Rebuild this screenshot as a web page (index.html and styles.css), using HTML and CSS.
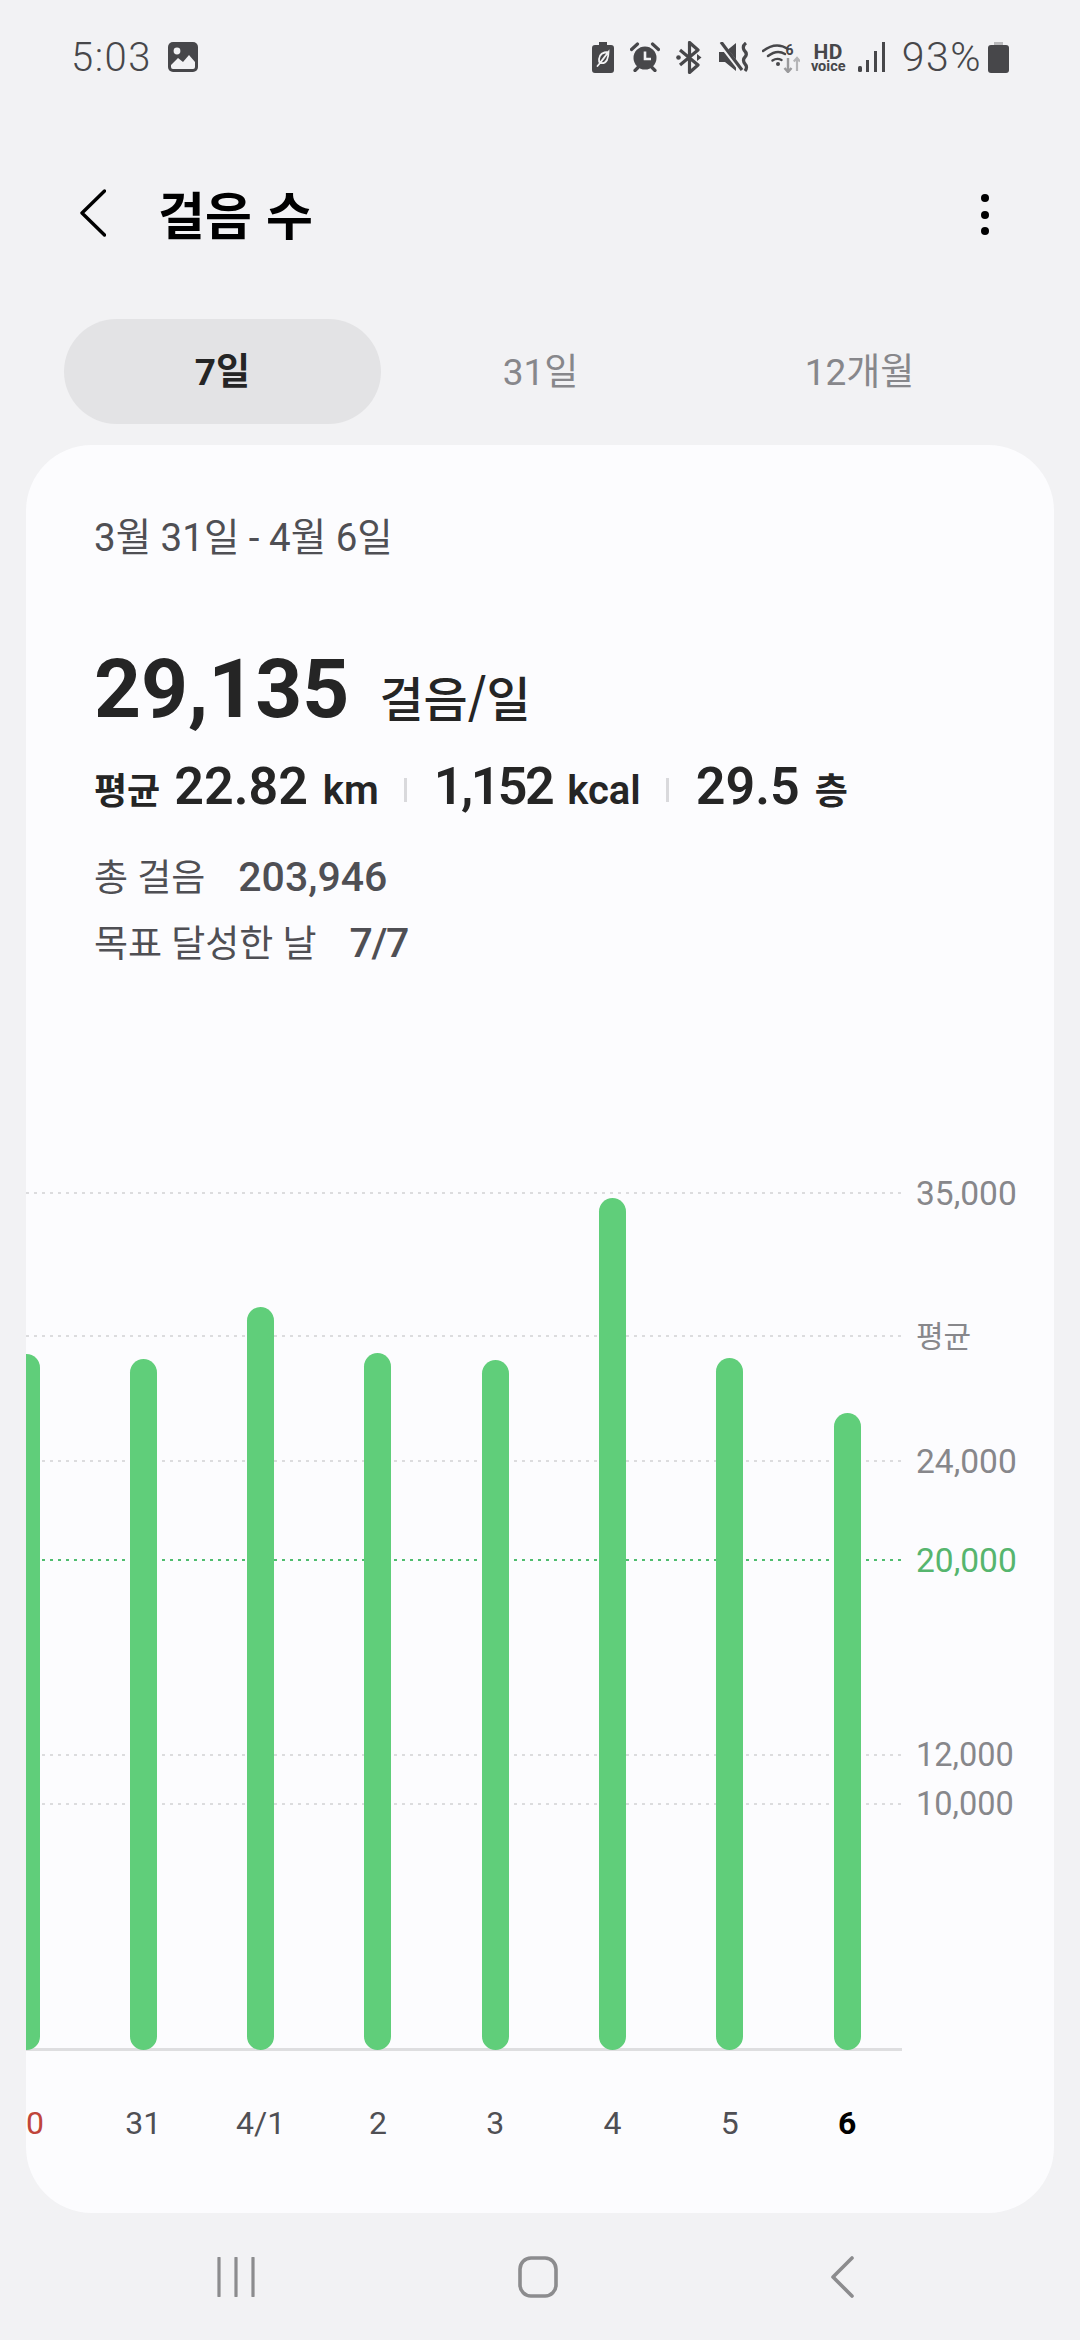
FILE: index.html
```html
<!DOCTYPE html>
<html lang="ko">
<head>
<meta charset="utf-8">
<title>걸음 수</title>
<link rel="stylesheet" href="styles.css">
</head>
<body>
<div class="screen">
  <header class="status">
    <div class="status-left">
      <span class="time">5:03</span>
      <svg class="ic-photo" viewBox="0 0 32 32"><rect x="1" y="1" width="30" height="30" rx="5" fill="#47474a"/><path d="M4 24L11 17L16 21L22 14L28 21V26Q28 28 26 28H6Q4 28 4 26Z" fill="#f2f2f4"/><circle cx="10" cy="10" r="3.400" fill="#f2f2f4"/></svg>
    </div>
    <div class="status-right">
      <svg class="ic-batleaf" viewBox="0 0 22 31"><path d="M7 0H15V3H19Q22 3 22 6V28Q22 31 19 31H3Q0 31 0 28V6Q0 3 3 3H7Z" fill="#47474a"/><path d="M16.500 10C11 10 7.500 12.500 7 17Q6.800 19.500 8 21L5.500 24M8 21Q13 22 15 18Q16.500 14.500 16.500 10ZM8 21L12 16" fill="none" stroke="#f2f2f4" stroke-width="1.800" stroke-linecap="round"/></svg>
      <svg class="ic-alarm" viewBox="0 0 30 30"><circle cx="15" cy="16" r="11.500" fill="#47474a"/><path d="M15 9.500V17H21" fill="none" stroke="#f2f2f4" stroke-width="2.600"/><path d="M1.500 7.500L7.500 2M28.500 7.500L22.500 2M5 28.500L8 25.500M25 28.500L22 25.500" stroke="#47474a" stroke-width="3.200" stroke-linecap="round" fill="none"/></svg>
      <svg class="ic-bt" viewBox="0 0 28 33"><path d="M4 9L22 24L13.500 31.500V1.500L22 9L4 24" fill="none" stroke="#47474a" stroke-width="3.200" stroke-linejoin="round"/><circle cx="2.500" cy="16.500" r="2.300" fill="#47474a"/><path d="M21 13L25.500 16.500L21 20Z" fill="#47474a"/></svg>
      <svg class="ic-mute" viewBox="0 0 31 30"><path d="M0 10H6L17 1V29L6 20H0Z" fill="#47474a"/><path d="M1 1L22 28" stroke="#f2f2f4" stroke-width="5"/><path d="M2 0L23 28" stroke="#47474a" stroke-width="3.200"/><path d="M27 1Q23 4 25 8Q29 12 26 15Q23 18 26 22Q29 25 26 29" fill="none" stroke="#47474a" stroke-width="3.200"/></svg>
      <svg class="ic-wifi" viewBox="0 0 38 31"><path d="M1 9Q14 -1 26 7M6 14Q15 7 23 12M10.500 18.500Q15 15.500 19.500 18" fill="none" stroke="#47474a" stroke-width="2.400" stroke-linecap="round"/><circle cx="16" cy="22" r="2" fill="#47474a"/><text x="23.500" y="13" class="wifi-six">6</text><path d="M26 16V30M22.500 26L26 30L29.500 26" fill="none" stroke="#9a9a9c" stroke-width="2.400"/><path d="M35 29V16M31.800 19.500L35 16L38 19.500" fill="none" stroke="#b5b5b7" stroke-width="2.200"/></svg>
      <div class="hd"><span class="hd-top">HD</span><span class="hd-low">voice</span></div>
      <svg class="ic-signal" viewBox="0 0 28 30"><rect x="0" y="24" width="4" height="6" rx="1.500" fill="#47474a"/><rect x="8" y="18" width="3" height="12" fill="#47474a"/><rect x="16" y="9" width="3" height="21" fill="#47474a"/><rect x="24" y="0" width="3" height="30" fill="#47474a"/></svg>
      <span class="pct">93%</span>
      <svg class="ic-bat" viewBox="0 0 21 31"><path d="M6 0H15V3H6Z" fill="#b9b9bb"/><path d="M3 3H18Q21 3 21 6V28Q21 31 18 31H3Q0 31 0 28V6Q0 3 3 3Z" fill="#47474a"/></svg>
    </div>
  </header>

  <div class="appbar">
    <svg class="ic-back" viewBox="0 0 26 48"><path d="M24.500 2L2 24L24.500 46" fill="none" stroke="#000" stroke-width="3.400" stroke-linecap="round" stroke-linejoin="round"/></svg>
    <h1 class="title">걸음 수</h1>
    <div class="more"><i></i><i></i><i></i></div>
  </div>

  <nav class="tabs">
    <div class="tab tab-on">7일</div>
    <div class="tab">31일</div>
    <div class="tab">12개월</div>
  </nav>

  <main class="card">
    <div class="range">3월 31일 - 4월 6일</div>
    <div class="big"><span class="big-num">29,135</span><span class="big-unit">걸음/일</span></div>
    <div class="avg">
      <span class="avg-lead">평균</span>
      <span class="avg-num">22.82</span><span class="avg-unit">km</span>
      <span class="sep"></span>
      <span class="avg-num tight">1,152</span><span class="avg-unit">kcal</span>
      <span class="sep"></span>
      <span class="avg-num">29.5</span><span class="avg-unit kr">층</span>
    </div>
    <div class="meta"><span class="meta-k">총 걸음</span><span class="meta-v">203,946</span></div>
    <div class="meta"><span class="meta-k">목표 달성한 날</span><span class="meta-v narrow">7/7</span></div>

    <section class="chart">
      <div class="gridline" style="top:0"><span class="dots"></span><span class="tick">35,000</span></div>
      <div class="gridline" style="top:143px"><span class="dots"></span><span class="tick tick-kr">평균</span></div>
      <div class="gridline" style="top:268px"><span class="dots"></span><span class="tick">24,000</span></div>
      <div class="gridline goal" style="top:367px"><span class="dots"></span><span class="tick">20,000</span></div>
      <div class="gridline" style="top:562px"><span class="dots"></span><span class="tick small">12,000</span></div>
      <div class="gridline" style="top:611px"><span class="dots"></span><span class="tick small">10,000</span></div>
      <div class="plot">
        <div class="col"><div class="bar" style="height:696px"></div></div>
        <div class="col"><div class="bar" style="height:691px"></div></div>
        <div class="col"><div class="bar" style="height:743px"></div></div>
        <div class="col"><div class="bar" style="height:697px"></div></div>
        <div class="col"><div class="bar" style="height:690px"></div></div>
        <div class="col"><div class="bar" style="height:852px"></div></div>
        <div class="col"><div class="bar" style="height:692px"></div></div>
        <div class="col"><div class="bar" style="height:637px"></div></div>
      </div>
      <div class="axis"></div>
      <div class="dates">
        <span class="sun">30</span><span>31</span><span>4/1</span><span>2</span><span>3</span><span>4</span><span>5</span><span class="today">6</span>
      </div>
    </section>
  </main>

  <footer class="navbar">
    <svg class="ic-recent" viewBox="0 0 38 40"><path d="M2 1V39M19 1V39M36 1V39" stroke="#8c8c8e" stroke-width="3.200" stroke-linecap="round"/></svg>
    <svg class="ic-home" viewBox="0 0 40 42"><rect x="2" y="2" width="36" height="38" rx="11" fill="none" stroke="#8c8c8e" stroke-width="3.600"/></svg>
    <svg class="ic-navback" viewBox="0 0 24 42"><path d="M22 2L3 21L22 40" fill="none" stroke="#8c8c8e" stroke-width="3.600" stroke-linecap="round" stroke-linejoin="round"/></svg>
  </footer>
</div>
</body>
</html>
```
FILE: styles.css
```css
* { box-sizing: border-box; }
html, body { margin: 0; padding: 0; }
body {
  width: 1080px;
  height: 2340px;
  background: #f2f2f4;
  font-family: Roboto, "Noto Sans CJK KR", sans-serif;
  overflow: hidden;
}
.screen { display: flex; flex-direction: column; height: 2340px; }

/* status bar */
.status {
  height: 114px;
  padding: 0 71px 0 71px;
  display: flex;
  align-items: center;
  justify-content: space-between;
  color: #47474a;
}
.status-left { display: flex; align-items: center; gap: 15px; }
.time { font-size: 40px; font-weight: 300; letter-spacing: 1.500px; }
.ic-photo { width: 32px; height: 32px; }
.status-right { display: flex; align-items: center; }
.ic-batleaf { width: 22px; height: 31px; }
.ic-alarm { width: 30px; height: 30px; margin-left: 16px; }
.ic-bt { width: 28px; height: 33px; margin-left: 16px; }
.ic-mute { width: 31px; height: 30px; margin-left: 15px; }
.ic-wifi { width: 38px; height: 31px; margin-left: 12px; }
.wifi-six { font: 700 14px Roboto, sans-serif; fill: #47474a; }
.hd { width: 33px; margin-left: 12px; display: flex; flex-direction: column; align-items: center; color: #47474a; }
.hd-top { font: 700 21px/18px Roboto, sans-serif; letter-spacing: 0.500px; }
.hd-low { font: 700 14.500px/11px Roboto, sans-serif; }
.ic-signal { width: 28px; height: 30px; margin-left: 13px; }
.pct { font-size: 41px; font-weight: 300; margin-left: 16px; letter-spacing: 1.500px; }
.ic-bat { width: 21px; height: 31px; margin-left: 6px; }

/* app bar */
.appbar {
  height: 198px;
  margin-bottom: 7px;
  padding: 0 91px 0 80px;
  display: flex;
  align-items: center;
}
.ic-back { width: 26px; height: 48px; }
.title {
  margin: 0 0 0 52px;
  font-size: 51px;
  font-weight: 700;
  color: #000;
  flex: 1;
  font-family: "Noto Sans CJK KR", sans-serif;
}
.more { display: flex; flex-direction: column; gap: 8.500px; margin-top: 3px; }
.more i { width: 8px; height: 8px; border-radius: 50%; background: #000; display: block; }

/* tabs */
.tabs {
  display: grid;
  grid-template-columns: 317px 319px 319px;
  margin: 0 0 21px 64px;
}
.tab {
  height: 105px;
  border-radius: 53px;
  display: flex;
  align-items: center;
  justify-content: center;
  padding-bottom: 5px;
  font-size: 37px;
  color: #87878b;
}
.tab-on { background: #e3e3e5; color: #252525; font-weight: 700; }

/* card */
.card {
  margin: 0 26px;
  height: 1768px;
  background: #fcfcfe;
  border-radius: 66px;
  overflow: hidden;
  padding-top: 70px;
}
.range { margin-left: 68px; font-size: 38.500px; line-height: 46px; color: #4f4f54; }
.big { margin: 78px 0 0 68px; display: flex; align-items: baseline; line-height: 100px; color: #252525; }
.big-num { font-size: 82px; font-weight: 700; }
.big-unit { font-size: 48px; font-weight: 500; margin-left: 30px; font-family: "Noto Sans CJK KR", sans-serif; }
.avg { margin: 11px 0 0 68px; display: flex; align-items: baseline; line-height: 60px; color: #252525; }
.avg-lead { font-size: 36px; font-weight: 700; margin-right: 14px; }
.avg-num { font-size: 52px; font-weight: 600; }
.tight { letter-spacing: -2.500px; }
.avg-unit { font-size: 40px; font-weight: 600; margin-left: 15px; }
.kr { font-size: 36px; }
.sep { width: 3px; height: 24px; background: #d9d9dc; margin: 0 27px 0 25px; align-self: center; }
.meta { margin-left: 68px; display: flex; align-items: baseline; color: #4f4f54; line-height: 64px; }
.avg + .meta { margin-top: 23px; }
.meta-k { font-size: 37px; margin-right: 33px; }
.meta-v { font-size: 41px; font-weight: 500; }
.narrow { letter-spacing: -1.500px; }

/* chart */
.chart { position: relative; margin-top: 215px; }
.gridline {
  position: absolute;
  left: 0;
  right: 0;
  height: 2px;
  display: flex;
  align-items: center;
  color: #87878b;
}
.dots {
  width: 876px;
  height: 2px;
  background: repeating-linear-gradient(90deg, #dcdcde 0 3px, transparent 3px 8px);
}
.tick { margin-left: 14px; font-size: 33.500px; white-space: nowrap; }
.tick-kr { font-size: 30px; padding-bottom: 4px; }
.small { font-size: 32.500px; }
.goal { color: #56b56e; }
.goal .dots { background: repeating-linear-gradient(90deg, #4fbd6f 0 3px, transparent 3px 8px); }
.plot {
  position: relative;
  height: 858px;
  margin-left: -58.650px;
  display: grid;
  grid-template-columns: repeat(8, 117.300px);
  align-items: end;
}
.col { display: flex; justify-content: center; align-items: flex-end; height: 100%; }
.bar {
  width: 27px;
  border-radius: 14px;
  background: #60ce7a;
}
.axis { width: 876px; height: 3px; margin-top: -2px; background: #dedee0; }
.dates {
  margin: 52px 0 0 -58.650px;
  display: grid;
  grid-template-columns: repeat(8, 117.300px);
  font-size: 32px;
  line-height: 40px;
  color: #4f4f54;
  text-align: center;
}
.sun { color: #c0453a; }
.today { color: #000; font-weight: 700; }

/* nav bar */
.navbar { flex: 1; position: relative; display: flex; align-items: center; }
.ic-recent { width: 38px; height: 40px; margin-left: 217px; }
.ic-home { width: 40px; height: 42px; margin-left: 263px; }
.ic-navback { width: 24px; height: 42px; margin-left: 272px; }
```
